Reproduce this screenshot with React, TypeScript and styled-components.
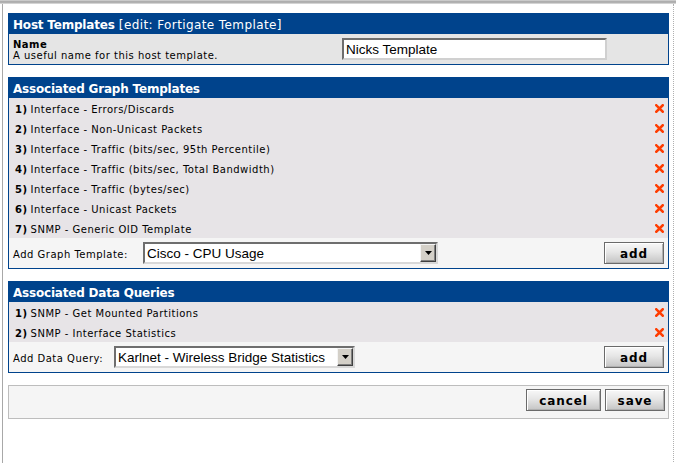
import React from "react";
import styled, { createGlobalStyle } from "styled-components";

const Global = createGlobalStyle`
  html, body { margin: 0; padding: 0; background: #fff; }
  body { font-family: "DejaVu Sans", Verdana, sans-serif; font-size: 10px; letter-spacing: 0.5px; color: #000; }
`;

const TopBar = styled.div`
  height: 4px;
  background: linear-gradient(#d8d8d8, #a0a0a0 50%, #e4e4e4);
`;

const Frame = styled.div`
  margin-left: 2px;
  width: 661px;
  min-height: 459px;
  box-sizing: content-box;
  border-left: 1px solid #a8a8a8;
  border-right: 1px dotted #b0b0b0;
  padding: 9px 4px 0 5px;
  display: flex;
  flex-direction: column;
  gap: 12px;
`;

const Panel = styled.section`
  border: 1px solid #00438c;
  border-top: none;
  display: flex;
  flex-direction: column;
`;

const Header = styled.div`
  background: #00438c;
  color: #fff;
  height: 21px;
  line-height: 24px;
  padding-left: 4px;
  font-size: 12px;
  letter-spacing: 0.4px;
  white-space: nowrap;
`;

const Title = styled.span`
  font-weight: bold;
  letter-spacing: -0.2px;
`;

const NameRow = styled.div`
  background: #e5e5e5;
  height: 30px;
  display: flex;
  align-items: center;
  padding-left: 4px;
`;

const NameLabel = styled.div`
  width: 329px;
  line-height: 11px;
  padding-top: 1px;
`;

const Bold = styled.div`
  font-weight: bold;
`;

const TextInput = styled.input`
  width: 265px;
  height: 22px;
  box-sizing: border-box;
  border: 2px solid;
  border-color: #6e6e6e #d0d0d0 #d0d0d0 #6e6e6e;
  background: #fff;
  font-family: "Liberation Sans", Arial, sans-serif;
  font-size: 13.5px;
  letter-spacing: 0;
  padding: 0 2px;
  margin-top: 0;
  outline: none;
`;

const ItemRow = styled.div`
  background: #e7e4e7;
  height: 20px;
  display: flex;
  align-items: center;
  padding-left: 6px;
  padding-right: 4px;
`;

const ItemText = styled.span`
  flex: 1;
  white-space: nowrap;
  padding-top: 2px;
`;

const Num = styled.b`
  margin-right: 3px;
`;

const AddRow = styled.div<{ $h: number }>`
  background: #f5f5f5;
  height: ${(p) => p.$h}px;
  display: flex;
  align-items: center;
  padding-left: 4px;
  padding-right: 4px;
`;

const AddLabel = styled.span<{ $w: number }>`
  width: ${(p) => p.$w}px;
  white-space: nowrap;
  padding-top: 2px;
`;

const SelectBox = styled.div<{ $w: number }>`
  width: ${(p) => p.$w}px;
  height: 22px;
  box-sizing: border-box;
  border: 2px solid;
  border-color: #6e6e6e #d8d8d8 #d8d8d8 #6e6e6e;
  background: #fff;
  display: flex;
  align-items: stretch;
`;

const NativeSelect = styled.select`
  flex: 1;
  appearance: none;
  border: none;
  background: transparent;
  font-family: "Liberation Sans", Arial, sans-serif;
  font-size: 13.5px;
  letter-spacing: 0;
  padding: 0 2px;
  outline: none;
  color: #000;
`;

const ArrowBtn = styled.div`
  width: 16px;
  box-sizing: border-box;
  background: #d4d0c8;
  border: 1px solid;
  border-color: #f4f4f4 #404040 #404040 #f4f4f4;
  box-shadow: inset -1px -1px 0 #808080;
  display: flex;
  align-items: center;
  justify-content: center;
`;

const Spacer = styled.div`
  flex: 1;
`;

const Button = styled.button<{ $w: number }>`
  width: ${(p) => p.$w}px;
  height: 22px;
  box-sizing: border-box;
  border: 1px solid #6a6a6a;
  box-shadow: inset 1px 1px 0 #fff, inset -1px -1px 0 #b0b0b0;
  background: linear-gradient(#f8f8f8, #e6e6e6 45%, #c4c4c4);
  font-family: "DejaVu Sans", Verdana, sans-serif;
  font-weight: bold;
  font-size: 12px;
  letter-spacing: 0.9px;
  color: #000;
  padding: 1px 0 0;
  cursor: pointer;
`;

const SaveBar = styled.div`
  border: 1px solid #bdbdbd;
  background: #f5f5f5;
  height: 29px;
  display: flex;
  align-items: flex-start;
  justify-content: flex-end;
  gap: 4px;
  padding: 3px 3px 0 0;
`;

const DeleteX = () => (
  <svg width="9" height="9" viewBox="0 0 9 9">
    <path d="M1.3 1.3 L7.7 7.7 M7.7 1.3 L1.3 7.7" stroke="#ff3c00" strokeWidth="2.6" strokeLinecap="square" />
  </svg>
);

const Arrow = () => (
  <svg width="7" height="4" viewBox="0 0 7 4">
    <path d="M0 0 H7 L3.5 4 Z" fill="#000" />
  </svg>
);

const graphs = [
  "Interface - Errors/Discards",
  "Interface - Non-Unicast Packets",
  "Interface - Traffic (bits/sec, 95th Percentile)",
  "Interface - Traffic (bits/sec, Total Bandwidth)",
  "Interface - Traffic (bytes/sec)",
  "Interface - Unicast Packets",
  "SNMP - Generic OID Template",
];

const queries = ["SNMP - Get Mounted Partitions", "SNMP - Interface Statistics"];

const Item = ({ n, text }: { n: number; text: string }) => (
  <ItemRow>
    <ItemText>
      <Num>{n})</Num>
      {text}
    </ItemText>
    <DeleteX />
  </ItemRow>
);

export default function App() {
  return (
    <>
      <Global />
      <TopBar />
      <Frame>
        <Panel>
          <Header>
            <Title>Host Templates</Title> [edit: Fortigate Template]
          </Header>
          <NameRow>
            <NameLabel>
              <Bold>Name</Bold>
              <div>A useful name for this host template.</div>
            </NameLabel>
            <TextInput defaultValue="Nicks Template" />
          </NameRow>
        </Panel>

        <Panel>
          <Header>
            <Title>Associated Graph Templates</Title>
          </Header>
          {graphs.map((g, i) => (
            <Item key={g} n={i + 1} text={g} />
          ))}
          <AddRow $h={30}>
            <AddLabel $w={130}>Add Graph Template:</AddLabel>
            <SelectBox $w={295}>
              <NativeSelect defaultValue="cpu">
                <option value="cpu">Cisco - CPU Usage</option>
              </NativeSelect>
              <ArrowBtn>
                <Arrow />
              </ArrowBtn>
            </SelectBox>
            <Spacer />
            <Button $w={60}>add</Button>
          </AddRow>
        </Panel>

        <Panel>
          <Header>
            <Title>Associated Data Queries</Title>
          </Header>
          {queries.map((q, i) => (
            <Item key={q} n={i + 1} text={q} />
          ))}
          <AddRow $h={30}>
            <AddLabel $w={101}>Add Data Query:</AddLabel>
            <SelectBox $w={241}>
              <NativeSelect defaultValue="karlnet">
                <option value="karlnet">Karlnet - Wireless Bridge Statistics</option>
              </NativeSelect>
              <ArrowBtn>
                <Arrow />
              </ArrowBtn>
            </SelectBox>
            <Spacer />
            <Button $w={60}>add</Button>
          </AddRow>
        </Panel>

        <SaveBar>
          <Button $w={75}>cancel</Button>
          <Button $w={60}>save</Button>
        </SaveBar>
      </Frame>
    </>
  );
}
